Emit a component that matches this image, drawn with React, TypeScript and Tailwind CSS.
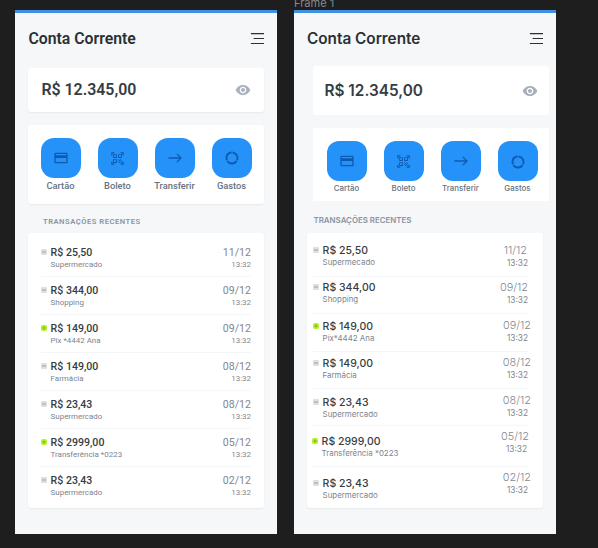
import React from "react";
import { MdOutlineCreditCard, MdQrCodeScanner, MdRemoveRedEye } from "react-icons/md";

type Row = {
  amount: string;
  label: string;
  date: string;
  income?: boolean;
  row: string;
  left: string;
  right: string;
  datePos: string;
};

const leftRows: Row[] = [
  { amount: "R$ 25,50", label: "Supermercado", date: "11/12" },
  { amount: "R$ 344,00", label: "Shopping", date: "09/12" },
  { amount: "R$ 149,00", label: "Pix *4442 Ana", date: "09/12", income: true },
  { amount: "R$ 149,00", label: "Farmácia", date: "08/12" },
  { amount: "R$ 23,43", label: "Supermercado", date: "08/12" },
  { amount: "R$ 2999,00", label: "Transferência *0223", date: "05/12", income: true },
  { amount: "R$ 23,43", label: "Supermercado", date: "02/12" },
].map((r) => ({ ...r, row: "h-[38px]", left: "pt-[6px]", right: "pt-[6px]", datePos: "" }));

const rightRows: Row[] = [
  { amount: "R$ 25,50", label: "Supermecado", date: "11/12", row: "h-[38px]", left: "pt-[4px]", right: "pt-[4px]", datePos: "pr-px" },
  { amount: "R$ 344,00", label: "Shopping", date: "09/12", row: "h-[37px]", left: "pt-[3px]", right: "pt-[3px]", datePos: "" },
  { amount: "R$ 149,00", label: "Pix*4442 Ana", date: "09/12", income: true, row: "h-[38px]", left: "pt-[5px]", right: "pt-[4px]", datePos: "-mr-[3px]" },
  { amount: "R$ 149,00", label: "Farmácia", date: "08/12", row: "h-[37px]", left: "pt-[4px]", right: "pt-[3px]", datePos: "-mr-[3px]" },
  { amount: "R$ 23,43", label: "Supermercado", date: "08/12", row: "h-[37px]", left: "pt-[6px]", right: "pt-[4px]", datePos: "-mr-[3px]" },
  { amount: "R$ 2999,00", label: "Transferência *0223", date: "05/12", income: true, row: "h-[41px]", left: "pt-[8px] -ml-px", right: "pt-[3px] pr-px", datePos: "-mr-[2px]" },
  { amount: "R$ 23,43", label: "Supermercado", date: "02/12", row: "h-[38px]", left: "pt-[9px]", right: "pt-[3px]", datePos: "-mr-[3px]" },
];

function MenuIcon() {
  return (
    <svg width="14" height="12" viewBox="0 0 14 12" fill="none" stroke="#2b3035" strokeWidth="1.2">
      <path d="M0.9 0.6H14M3.6 5.5H14M0.9 10.5H14" />
    </svg>
  );
}

function ArrowIcon() {
  return (
    <svg width="14" height="12" viewBox="0 0 14 12" fill="none" stroke="#0d5bb0" strokeWidth="1.3">
      <path d="M0.5 6H13M8.9 1.9L13 6L8.9 10.1" />
    </svg>
  );
}

// Ring split into three equal arcs
function RingIcon() {
  return (
    <svg width="14" height="14" viewBox="0 0 14 14" fill="none" stroke="#0d5bb0" strokeWidth="1.9">
      <circle cx="7" cy="7" r="5.5" pathLength="300" strokeDasharray="92 8" transform="rotate(-85 7 7)" />
    </svg>
  );
}

const actions = [
  { name: "Cartão", icon: <MdOutlineCreditCard size={16} /> },
  { name: "Boleto", icon: <MdQrCodeScanner size={15} /> },
  { name: "Transferir", icon: <ArrowIcon /> },
  { name: "Gastos", icon: <RingIcon /> },
];

function Actions({ tile, label, last }: { tile: string; label: string; last: string }) {
  return (
    <>
      {actions.map((a, i) => (
        <div key={a.name} className="flex w-[57px] shrink-0 flex-col items-center">
          <div className={`flex items-center justify-center bg-[#2492f8] text-[#0d5bb0] ${tile}`}>
            <span className={i === 3 ? last : ""}>{a.icon}</span>
          </div>
          <span className={`whitespace-nowrap text-[#66727f] ${label}`}>{a.name}</span>
        </div>
      ))}
    </>
  );
}

function Badge({ income }: { income?: boolean }) {
  return income ? (
    <svg className="mt-[4px] shrink-0" width="6" height="6" viewBox="0 0 6 6">
      <rect width="6" height="6" rx="1.8" fill="#b4f230" />
      <path d="M3 1.4V4.6M1.4 3H4.6" stroke="#6fae08" strokeWidth="0.8" />
    </svg>
  ) : (
    <svg className="mt-[4px] shrink-0" width="6" height="6" viewBox="0 0 6 6">
      <rect width="6" height="6" rx="1" fill="#dddfe1" />
      <path d="M1.2 3H4.8" stroke="#92979c" strokeWidth="0.9" />
    </svg>
  );
}

type ListStyle = { amount: string; label: string; date: string; time: string };

function Transactions({ rows, s }: { rows: Row[]; s: ListStyle }) {
  return (
    <>
      {rows.map((r, i) => (
        <div
          key={i}
          className={`flex justify-between whitespace-nowrap ${r.row} ${i < rows.length - 1 ? "border-b border-[#f4f6f8]" : ""}`}
        >
          <div className={`flex ${r.left}`}>
            <Badge income={r.income} />
            <div className="ml-[3.6px] flex flex-col">
              <span className={`text-[#363c42] ${s.amount}`}>{r.amount}</span>
              <span className={`text-[#7b8590] ${s.label}`}>{r.label}</span>
            </div>
          </div>
          <div className={`flex flex-col items-end ${r.right}`}>
            <span className={`text-[#7f8891] ${s.date} ${r.datePos}`}>{r.date}</span>
            <span className={`text-[#7f8891] ${s.time}`}>13:32</span>
          </div>
        </div>
      ))}
    </>
  );
}

function DesignScreen() {
  return (
    <section className="mt-[10px] ml-[15px] flex h-[524px] w-[262px] flex-col border-t-[3px] border-[#3f8fe4] bg-[#f5f7f9] pl-[13px] font-['Roboto',sans-serif]">
      <header className="mt-[15px] flex h-[22px] w-[236px] items-center justify-between">
        <h1 className="pl-[0.4px] text-[15.8px] leading-[22px] font-semibold text-[#2b3035]">Conta Corrente</h1>
        <MenuIcon />
      </header>
      <div className="mt-[18px] flex h-[44px] w-[236px] items-center justify-between rounded-[3px] bg-white pr-[13px] pl-[13.4px] shadow-[0_1px_2px_#00000010]">
        <span className="text-[15.9px] font-semibold text-[#363c42]">R$ 12.345,00</span>
        <MdRemoveRedEye size={16} color="#a7b2bf" />
      </div>
      <div className="mt-[13px] flex h-[79px] w-[236px] rounded-[3px] bg-white pt-[13px] pl-[4px] shadow-[0_1px_2px_#00000010]">
        <Actions tile="size-[40px] rounded-[13px]" label="mt-[2px] text-[9.3px] leading-[12px] font-medium" last="" />
      </div>
      <h2 className="mt-[12px] ml-[15px] text-[7.6px] leading-[12px] font-semibold tracking-[0.52px] text-[#8a949e]">
        TRANSAÇÕES RECENTES
      </h2>
      <div className="mt-[5px] h-[275px] w-[236px] rounded-[3px] bg-white pt-[6px] pr-[13px] pl-[13px] shadow-[0_1px_2px_#00000010]">
        <Transactions
          rows={leftRows}
          s={{
            amount: "text-[10.6px] leading-[15px] font-medium",
            label: "text-[7.95px] leading-[10px]",
            date: "text-[10.6px] leading-[15px]",
            time: "text-[7.95px] leading-[10px]",
          }}
        />
      </div>
    </section>
  );
}

function FrameScreen() {
  return (
    <section className="mt-[10px] ml-[17px] flex h-[524px] w-[262px] flex-col border-t-[3px] border-[#3f8fe4] bg-[#f5f7f9] pl-[13px] font-['Inter',sans-serif]">
      <header className="mt-[15px] flex h-[22px] w-[236px] items-center justify-between">
        <h1 className="text-[15.3px] leading-[22px] font-semibold text-[#2b3035]">Conta Corrente</h1>
        <MenuIcon />
      </header>
      <div className="mt-[16px] ml-[6px] flex h-[49px] w-[236px] items-center justify-between rounded-[3px] bg-white pr-[11.5px] pl-[11.5px]">
        <span className="text-[15.35px] font-semibold text-[#363c42]">R$ 12.345,00</span>
        <MdRemoveRedEye size={16} color="#a7afb9" />
      </div>
      <div className="mt-[13px] ml-[6px] flex h-[73px] w-[236px] bg-white pt-[13px] pl-[5px]">
        <Actions tile="size-[40px] rounded-[12px]" label="mt-px text-[7.9px] leading-[12px] font-medium" last="relative top-px" />
      </div>
      <h2 className="mt-[13px] ml-[6.5px] text-[7.9px] leading-[12px] font-semibold text-[#8a949e]">TRANSAÇÕES RECENTES</h2>
      <div className="mt-[7px] h-[275px] w-[236px] rounded-[3px] bg-white pt-[6px] pr-[15px] pl-[6px] shadow-[0_1px_2px_#00000010]">
        <Transactions
          rows={rightRows}
          s={{
            amount: "text-[10.5px] leading-[15px] font-medium",
            label: "text-[7.9px] leading-[9px]",
            date: "text-[10.9px] leading-[15px] font-light",
            time: "text-[8.3px] leading-[10px]",
          }}
        />
      </div>
    </section>
  );
}

export default function App() {
  return (
    <div className="relative flex h-[548px] w-[598px] items-start overflow-hidden bg-[#1e1e1e]">
      <DesignScreen />
      <FrameScreen />
      <span className="absolute -top-[4px] left-[294px] font-['Inter',sans-serif] text-[11px] leading-[14px] text-[#8a8a8a]">
        Frame 1
      </span>
    </div>
  );
}
